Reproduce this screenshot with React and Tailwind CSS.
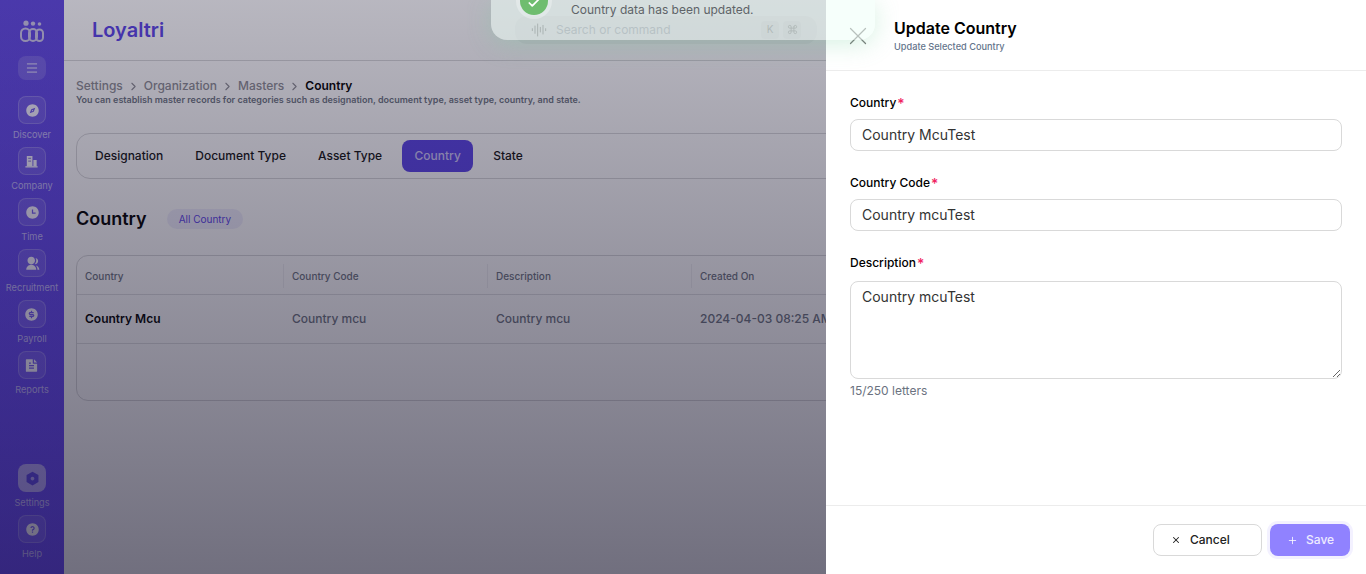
import {
  RiCompass3Fill,
  RiTimeFill,
  RiGroupFill,
  RiMoneyDollarCircleFill,
  RiFileTextFill,
  RiSettingsFill,
  RiQuestionFill,
} from 'react-icons/ri'
import { ChevronRight, Menu, X, Plus, AudioLines, Command, Check } from 'lucide-react'

function BuildingIcon({ className }) {
  return (
    <svg viewBox="0 0 16 16" width="15" height="15" fill="currentColor" className={className}>
      <path d="M3 2h6v11H3z M10 6.5h3.5V13H10z" />
      <rect x="1.5" y="13" width="13" height="1.4" />
      <rect x="4.5" y="4" width="3" height="1.2" fill="#8d7fd6" />
      <rect x="4.5" y="7" width="3" height="1.2" fill="#8d7fd6" />
    </svg>
  )
}

const NAV_TOP = [
  { label: 'Discover', icon: RiCompass3Fill },
  { label: 'Company', icon: BuildingIcon },
  { label: 'Time', icon: RiTimeFill },
  { label: 'Recruitment', icon: RiGroupFill },
  { label: 'Payroll', icon: RiMoneyDollarCircleFill },
  { label: 'Reports', icon: RiFileTextFill },
]

const TABS = ['Designation', 'Document Type', 'Asset Type', 'Country', 'State']
const CRUMBS = ['Settings', 'Organization', 'Masters']

function Logo() {
  return (
    <svg width="26" height="22" viewBox="0 0 26 22" fill="none">
      <circle cx="7" cy="3.2" r="2.6" fill="#c9c4e8" />
      <circle cx="14" cy="3.6" r="2.2" fill="#c9c4e8" />
      <circle cx="20.5" cy="4" r="1.8" fill="#c9c4e8" />
      <rect x="2" y="8.5" width="9" height="12.5" rx="4.5" stroke="#c9c4e8" strokeWidth="2" />
      <rect x="10" y="9" width="8" height="12" rx="4" stroke="#c9c4e8" strokeWidth="2" />
      <rect x="17" y="9.5" width="7" height="11.5" rx="3.5" stroke="#c9c4e8" strokeWidth="2" />
    </svg>
  )
}

function NavItem({ label, icon: Icon, active }) {
  return (
    <div className="flex flex-col items-center h-[51px]">
      <div className={`w-7 h-7 rounded-lg flex items-center justify-center border ${active ? 'bg-white/50 border-transparent' : 'bg-white/10 border-white/20'}`}>
        <Icon className={`text-[15px] ${active ? 'text-[#5842e5]' : 'text-white/90'}`} />
      </div>
      <span className="text-[9.2px] leading-3 mt-[5px] text-white/60 whitespace-nowrap">{label}</span>
    </div>
  )
}

function Sidebar() {
  return (
    <aside className="w-16 shrink-0 h-full bg-gradient-to-b from-[#5e47e0] to-[#6344fa] flex flex-col items-center pt-[20px] pb-2">
      <Logo />
      <div className="w-7 h-6 mt-[14px] mb-4 rounded-lg bg-white/15 flex items-center justify-center">
        <Menu size={14} strokeWidth={1.5} className="text-white/90" />
      </div>
      {NAV_TOP.map(n => <NavItem key={n.label} {...n} />)}
      <div className="mt-auto">
        <NavItem label="Settings" icon={RiSettingsFill} active />
        <NavItem label="Help" icon={RiQuestionFill} />
      </div>
    </aside>
  )
}

function Page() {
  return (
    <main className="flex-1 min-w-0 h-full bg-[#fbfbfd]">
      <header className="h-[61px] border-b border-[#d4d4d8] flex items-center pl-7">
        <span className="text-xl font-semibold text-[#5842e5] w-[423px]">Loyaltri</span>
        <div className="w-[302px] h-7 rounded-xl bg-[#f1f1f3] flex items-center pl-[16px] pr-[16px] -mt-[1px]">
          <AudioLines size={16} strokeWidth={1} className="text-[#333]" />
          <span className="ml-[9px] flex-1 text-xs text-[#9ca3af]">Search or command</span>
          <span className="w-[18px] h-[18px] rounded bg-[#e5e5e8] text-[10px] text-[#888] flex items-center justify-center">K</span>
          <span className="ml-1 w-[18px] h-[18px] rounded bg-[#e5e5e8] text-[#888] flex items-center justify-center">
            <Command size={11} />
          </span>
        </div>
      </header>
      <div className="pl-3 pt-[17px]">
        <nav className="flex items-center text-xs leading-4 text-[#8a8a92] font-medium">
          {CRUMBS.map(c => (
            <span key={c} className="flex items-center">
              {c}
              <ChevronRight size={13} className="mx-1" />
            </span>
          ))}
          <span className="font-semibold text-black">Country</span>
        </nav>
        <p className="text-[9px] leading-3 font-semibold text-[#6b7280]">You can establish master records for categories such as designation, document type, asset type, country, and state.</p>

        <div className="mt-[27px] h-[46px] w-[1000px] rounded-[14px] border border-[#d4d4d8] flex items-center pl-[6px] gap-[1px] text-xs font-medium text-[#111]">
          {TABS.map(t => (
            <span key={t} className={`h-8 mr-[7px] flex items-center justify-center rounded-lg ${t === 'Country' ? 'w-[71px] bg-[#5842e5] text-white/70' : 'px-3'}`}>{t}</span>
          ))}
        </div>

        <div className="mt-[29px] h-[22px] flex items-center">
          <h2 className="text-lg font-semibold text-black">Country</h2>
          <span className="ml-5 h-5 px-3 rounded-full bg-[#ecebfa] text-[10px] text-[#5842e5] flex items-center">All Country</span>
        </div>

        <div className="mt-[25px] w-[1000px] h-[146px] rounded-xl border border-[#d4d4d8]">
          <div className="h-[39px] pt-[2px] grid grid-cols-[206px_204px_204px_1fr] items-center border-b border-[#dcdce0] text-[10px] text-[#6b7280] font-medium">
            {['Country', 'Country Code', 'Description', 'Created On'].map((h, i) => (
              <span key={h} className={`pl-2 h-6 flex items-center ${i ? 'border-l border-[#ececf0]' : ''}`}>{h}</span>
            ))}
          </div>
          <div className="h-[49px] grid grid-cols-[206px_204px_204px_1fr] items-center border-b border-[#dcdce0] text-xs font-medium text-[#6b7280]">
            <span className="pl-2 font-semibold text-black">Country Mcu</span>
            <span className="pl-[9px]">Country mcu</span>
            <span className="pl-[9px]">Country mcu</span>
            <span className="pl-[9px] whitespace-nowrap">2024-04-03 08:25 AM</span>
          </div>
        </div>
      </div>
    </main>
  )
}

function Field({ label, children, className = '', gap = 'mb-2' }) {
  return (
    <div className={className}>
      <label className={`block text-xs leading-4 font-medium text-black ${gap}`}>
        {label}
        <span className="inline-block ml-[1px] text-sm leading-3 text-[#f0245f] translate-y-[2px]">*</span>
      </label>
      {children}
    </div>
  )
}

const INPUT = 'block w-full h-8 rounded-lg border border-[#d9d9d9] bg-white pl-[11px] pr-3 pb-[2px] text-sm text-[#333] outline-none'

function Panel() {
  return (
    <section className="absolute right-0 top-0 h-full w-[540px] bg-white flex flex-col">
      <div className="h-[71px] shrink-0 border-b border-[#ececec] flex items-center pl-6">
        <X size={30} strokeWidth={1} className="text-[#777] mt-[1px] -ml-[7.5px] shrink-0" />
        <div className="ml-[21.5px] -mt-[1px]">
          <h1 className="text-base leading-6 font-semibold text-black">Update Country</h1>
          <p className="text-[9.2px] leading-[14px] font-medium text-[#64748b]">Update Selected Country</p>
        </div>
      </div>
      <div className="flex-1 px-6 pt-6">
        <Field label="Country">
          <input readOnly value="Country McuTest" className={INPUT} />
        </Field>
        <Field label="Country Code" className="mt-6">
          <input readOnly value="Country mcuTest" className={INPUT} />
        </Field>
        <Field label="Description" className="mt-6" gap="mb-[10px]">
          <textarea readOnly value="Country mcuTest" className="block w-full h-[98px] rounded-lg border border-[#d9d9d9] bg-white pl-[11px] pr-3 py-[5px] text-sm text-[#333] outline-none" />
        </Field>
        <p className="mt-[4px] text-xs leading-4 text-[#6b7280]">15/250 letters</p>
      </div>
      <div className="h-[69px] shrink-0 border-t border-[#ececec] flex items-center justify-end pr-4 gap-2">
        <button className="w-[109px] h-8 rounded-lg border border-[#d9d9d9] bg-white flex items-center pl-[17px] text-xs font-medium text-[#222]">
          <X size={10} strokeWidth={2.5} className="mr-[9px]" />Cancel
        </button>
        <button className="w-20 h-8 rounded-lg bg-[#9082ff] ring-[3px] ring-[#f3f1ff] flex items-center pl-[17px] text-xs font-medium text-white/85">
          <Plus size={11} strokeWidth={2} className="mr-[8px]" />Save
        </button>
      </div>
    </section>
  )
}

function Toast() {
  return (
    <div className="absolute top-0 left-[491px] w-[384px] h-10 rounded-b-2xl bg-[#eefff8]/55 shadow-[0_4px_24px_rgba(120,210,160,0.3)] overflow-hidden">
      <div className="absolute left-[29px] -top-[13px] w-7 h-7 rounded-full bg-[#6fbd6f] ring-4 ring-white/30 flex items-center justify-center">
        <Check size={14} strokeWidth={3} className="text-white mt-[3px]" />
      </div>
      <p className="pl-20 pt-[2px] text-xs leading-[15px] text-[#5f6368]">Country data has been updated.</p>
    </div>
  )
}

export default function App() {
  return (
    <div className="relative h-screen w-full overflow-hidden flex font-['Inter','Noto_Sans',sans-serif]">
      <Sidebar />
      <Page />
      {/* modal backdrop */}
      <div className="absolute inset-0 bg-gradient-to-b from-[#1c1830]/[0.3] to-[#15122a]/[0.6]" />
      <Panel />
      <Toast />
    </div>
  )
}
